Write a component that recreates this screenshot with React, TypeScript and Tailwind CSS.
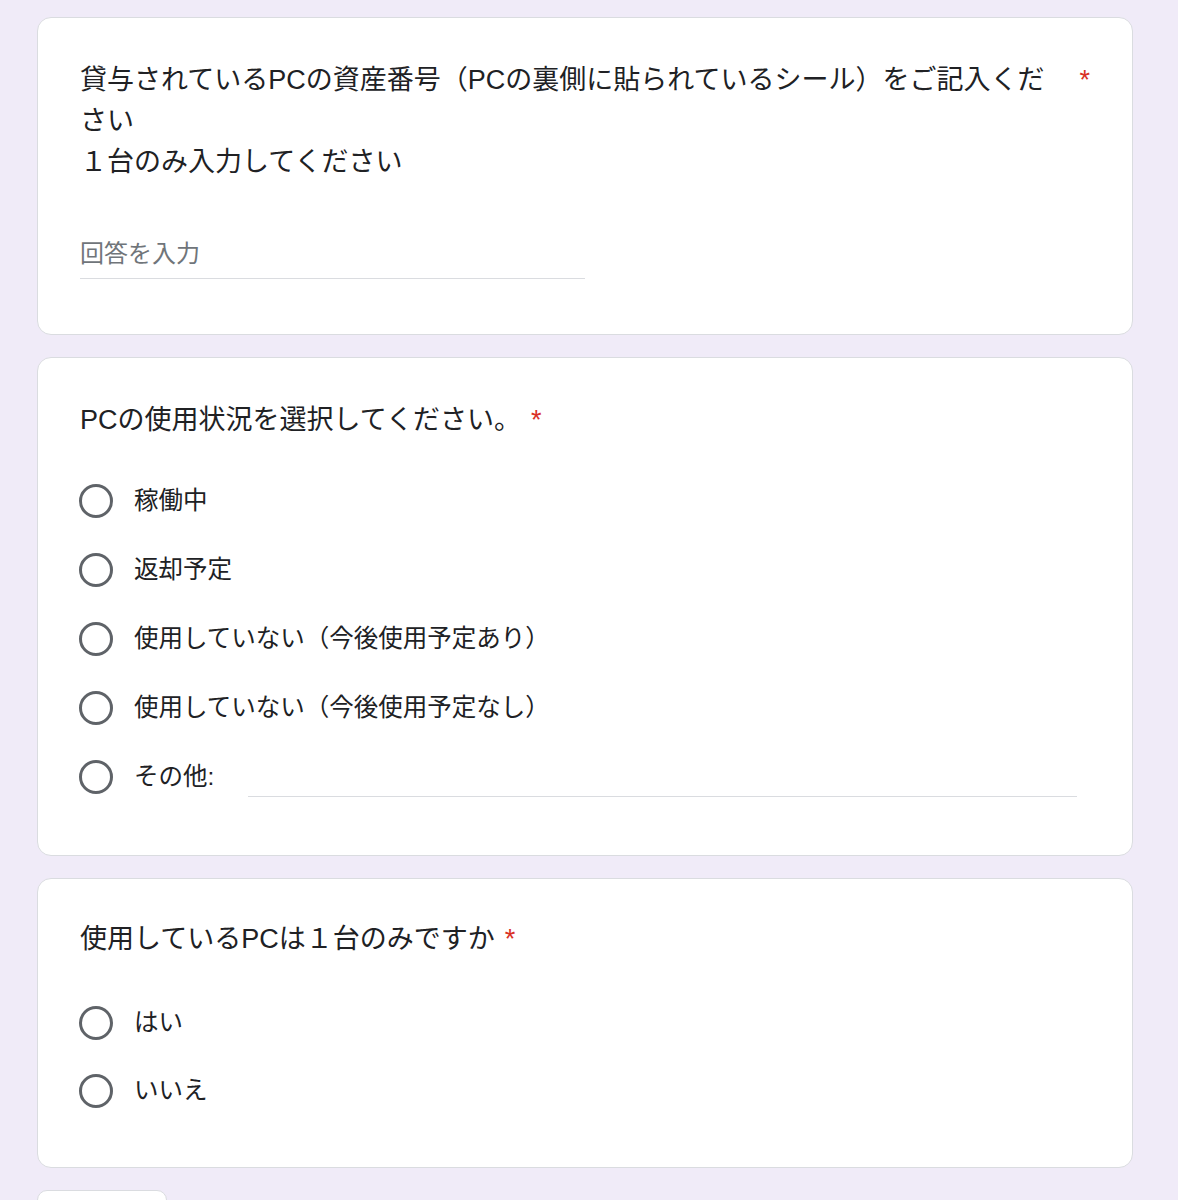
import React from 'react';

const font = "font-['Liberation_Sans','Noto_Sans_CJK_JP',sans-serif]";

function Required() {
  return <span className="ml-[10px] shrink-0 text-[27px] leading-[41px] text-[#d93025]">*</span>;
}

function Radio({ label }: { label: string }) {
  return (
    <div className="flex h-[48px] items-center">
      <div className="-ml-px h-[34px] w-[34px] shrink-0 rounded-full border-[3px] border-[#5f6368]" />
      <span className="ml-[21px] text-[24.5px] leading-[32px] text-[#202124]">{label}</span>
    </div>
  );
}

function Card({ children, className = '' }: { children: React.ReactNode; className?: string }) {
  return (
    <div className={`w-[1096px] rounded-[14px] border border-[#dadce0] bg-white px-[42px] ${className}`}>
      {children}
    </div>
  );
}

export default function App() {
  return (
    <div className={`min-h-[1200px] bg-[#f0ebf8] pl-[37px] pt-[17px] ${font}`}>
      <div className="flex flex-col gap-[22px]">
        {/* 資産番号 */}
        <Card className="pt-[42px] pb-[55px]">
          <div className="flex items-start">
            <div className="flex-1 text-[27px] leading-[41px] text-[#202124]">
              貸与されているPCの資産番号（PCの裏側に貼られているシール）をご記入ください
              <br />
              １台のみ入力してください
            </div>
            <Required />
          </div>
          <div className="mt-[55px] w-[505px] border-b border-[#dadce0] pb-[8px]">
            <div className="text-[24px] leading-[32px] text-[#70757a]">回答を入力</div>
          </div>
        </Card>

        {/* 使用状況 */}
        <Card className="pt-[42px] pb-[54px]">
          <div className="flex items-start">
            <div className="text-[27px] leading-[41px] text-[#202124]">PCの使用状況を選択してください。</div>
            <Required />
          </div>
          <div className="mt-[36px] flex flex-col gap-[21px]">
            <Radio label="稼働中" />
            <Radio label="返却予定" />
            <Radio label="使用していない（今後使用予定あり）" />
            <Radio label="使用していない（今後使用予定なし）" />
            <div className="flex h-[48px] items-center">
              <div className="-ml-px h-[34px] w-[34px] shrink-0 rounded-full border-[3px] border-[#5f6368]" />
              <span className="ml-[21px] text-[24.5px] leading-[32px] text-[#202124]">その他:</span>
              <div className="ml-[34px] mr-[13px] mt-[39px] flex-1 border-b border-[#dadce0]" />
            </div>
          </div>
        </Card>

        {/* 台数 */}
        <Card className="pt-[40px] pb-[52px]">
          <div className="flex items-start">
            <div className="text-[27px] leading-[41px] text-[#202124]">使用しているPCは１台のみですか</div>
            <Required />
          </div>
          <div className="mt-[39px] flex flex-col gap-[20px]">
            <Radio label="はい" />
            <Radio label="いいえ" />
          </div>
        </Card>

        <div className="h-[40px] w-[130px] rounded-[10px] border border-[#dadce0] bg-white" />
      </div>
    </div>
  );
}
